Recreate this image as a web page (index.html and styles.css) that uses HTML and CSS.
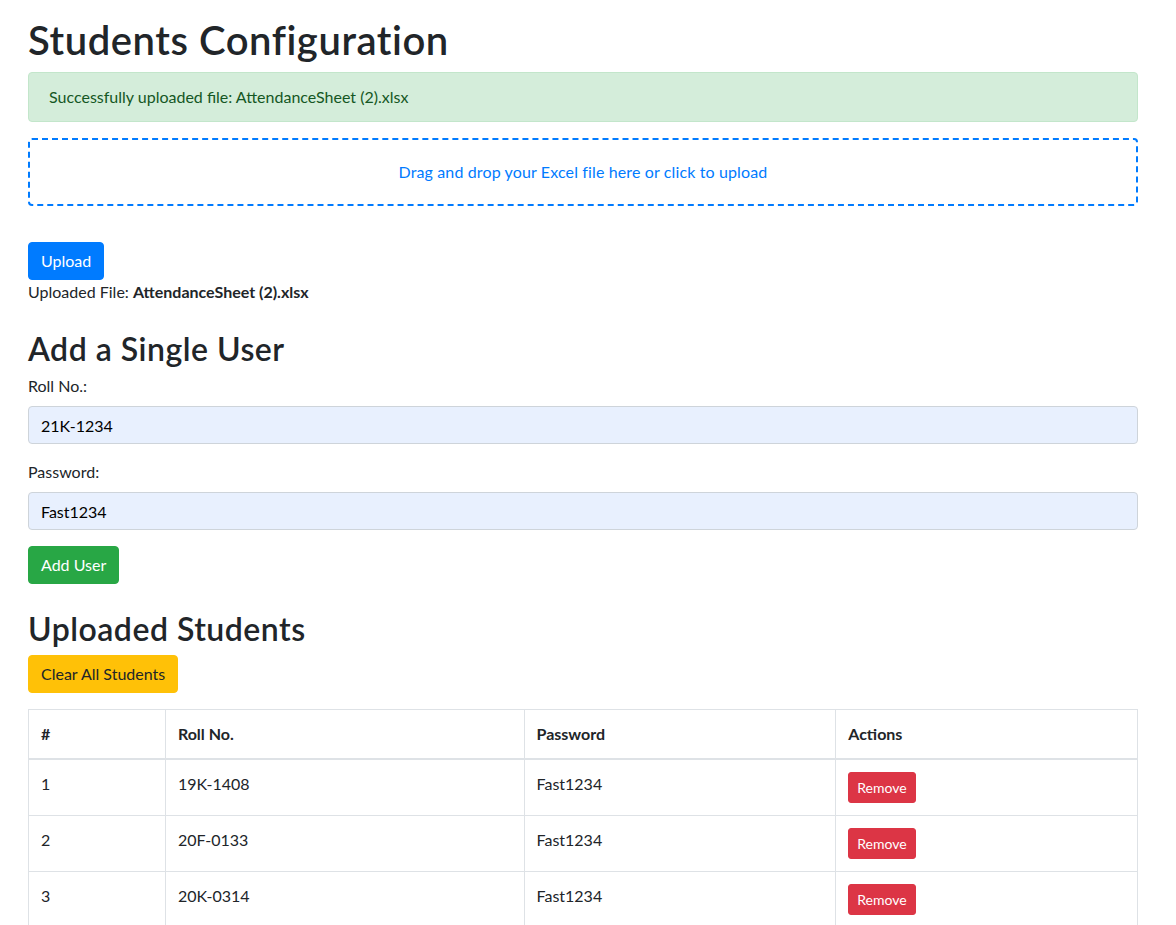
FILE: index.html
```html
<!DOCTYPE html>
<html lang="en">
<head>
<meta charset="utf-8">
<title>Students Configuration</title>
<link rel="stylesheet" href="styles.css">
</head>
<body>
<div class="container">
  <h1 class="title">Students Configuration</h1>
  <div class="alert">Successfully uploaded file: AttendanceSheet (2).xlsx</div>
  <div class="dropzone">Drag and drop your Excel file here or click to upload</div>
  <button class="btn btn-primary upload-btn">Upload</button>
  <p class="uploaded">Uploaded File: <strong>AttendanceSheet (2).xlsx</strong></p>

  <h2 class="section-title">Add a Single User</h2>
  <form class="user-form">
    <div class="form-group">
      <label class="form-label">Roll No.:</label>
      <input class="form-control" type="text" value="21K-1234">
    </div>
    <div class="form-group">
      <label class="form-label">Password:</label>
      <input class="form-control" type="text" value="Fast1234">
    </div>
    <button type="button" class="btn btn-success">Add User</button>
  </form>

  <h2 class="section-title students-title">Uploaded Students</h2>
  <button class="btn btn-warning">Clear All Students</button>
  <table class="table">
    <thead>
      <tr><th class="c1">#</th><th class="c2">Roll No.</th><th class="c3">Password</th><th class="c4">Actions</th></tr>
    </thead>
    <tbody>
      <tr><td>1</td><td>19K-1408</td><td>Fast1234</td><td><button class="btn btn-danger btn-sm">Remove</button></td></tr>
      <tr><td>2</td><td>20F-0133</td><td>Fast1234</td><td><button class="btn btn-danger btn-sm">Remove</button></td></tr>
      <tr><td>3</td><td>20K-0314</td><td>Fast1234</td><td><button class="btn btn-danger btn-sm">Remove</button></td></tr>
    </tbody>
  </table>
</div>
</body>
</html>
```

FILE: styles.css
```css
* { box-sizing: border-box; }
html, body { margin: 0; padding: 0; background: #fff; }
body {
  font-family: "Lato", "Noto Sans", sans-serif;
  font-size: 16px;
  line-height: 1.5;
  color: #212529;
}
.container {
  width: 1110px;
  margin-left: 28px;
  padding-top: 16px;
}
.title {
  font-size: 40px;
  font-weight: 600;
  line-height: 1.2;
  letter-spacing: 0.55px;
  margin: 0 0 8px;
}
.alert {
  background: #d4edda;
  border: 1px solid #c3e6cb;
  color: #155724;
  padding: 12px 20px;
  border-radius: 4px;
  margin-bottom: 16px;
}
.dropzone {
  border: 2px dashed #007bff;
  border-radius: 4px;
  padding: 20px;
  text-align: center;
  color: #007bff;
  letter-spacing: 0.13px;
  margin-bottom: 36px;
}
.btn {
  display: inline-block;
  font-family: inherit;
  font-size: 16px;
  line-height: 1.5;
  padding: 6px 12px;
  border: 1px solid transparent;
  border-radius: 4px;
  cursor: pointer;
}
.btn-primary { background: #007bff; border-color: #007bff; color: #fff; }
.btn-success { background: #28a745; border-color: #28a745; color: #fff; }
.btn-warning { background: #ffc107; border-color: #ffc107; color: #212529; }
.btn-danger { background: #dc3545; border-color: #dc3545; color: #fff; }
.btn-sm { font-size: 14px; padding: 4px 8px; border-radius: 3px; }
.upload-btn { display: block; }
.uploaded { margin: 0 0 16px; }
.uploaded strong { font-weight: 700; }
.section-title {
  font-size: 32px;
  font-weight: 600;
  line-height: 1.2;
  letter-spacing: 0.5px;
  margin: 26px 0 6px;
}
.user-form { margin: 0; }
.form-group { margin-bottom: 16px; }
.form-label { display: inline-block; margin-bottom: 8px; }
.form-control {
  display: block;
  width: 100%;
  height: 38px;
  padding: 6px 12px;
  font-family: inherit;
  font-size: 16px;
  line-height: 1.5;
  color: #000;
  background: #e8f0fe;
  border: 1px solid #ced4da;
  border-radius: 4px;
}
.students-title { margin-top: 26px; margin-bottom: 6px; }
.table {
  width: 100%;
  margin-top: 16px;
  border-collapse: collapse;
  color: #212529;
}
.table th, .table td {
  border: 1px solid #dee2e6;
  padding: 12px;
  text-align: left;
  vertical-align: top;
}
.table th { font-weight: 700; border-bottom-width: 2px; }
.c1 { width: 137px; }
.c2 { width: 359px; }
.c3 { width: 312px; }
.c4 { width: 302px; }
```
